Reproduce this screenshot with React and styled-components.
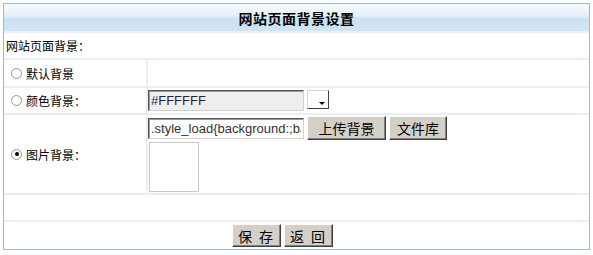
import React from "react";
import styled, { createGlobalStyle } from "styled-components";

const Global = createGlobalStyle`
  html, body { margin: 0; padding: 0; background: #fff; }
  body { font-family: "Noto Sans CJK SC", "Liberation Sans", sans-serif; font-size: 12px; color: #000; }
`;

const Page = styled.div`
  padding: 3px;
  width: 587px;
`;

const Panel = styled.div`
  border: 1px solid #9dbfc6;
  background: #e8eff5;
  display: flex;
  flex-direction: column;
  gap: 2px;
`;

const Header = styled.div`
  height: 27px;
  display: flex;
  align-items: center;
  justify-content: center;
  background: linear-gradient(#f6fafd 0%, #e4f0f9 45%, #cbe2f3 55%, #cfe5f5 100%);
  font-weight: bold;
  font-size: 14px;
  letter-spacing: 0.5px;
`;

const Row = styled.div`
  display: grid;
  grid-template-columns: ${(p) => (p.$split ? "142px 1fr" : "1fr")};
  gap: 2px;
  min-height: ${(p) => p.$h || 25}px;
`;

const Cell = styled.div`
  background: #fff;
  display: flex;
  align-items: center;
  justify-content: ${(p) => (p.$center ? "center" : "flex-start")};
  padding: ${(p) => p.$pad || "0"};
  gap: ${(p) => p.$gap || 0}px;
`;

const Stack = styled.div`
  display: flex;
  flex-direction: column;
  align-items: flex-start;
  gap: 2px;
  padding: 1px 0;
`;

const Line = styled.div`
  display: grid;
  grid-template-columns: 156px 79px 58px;
  align-items: center;
  column-gap: 3px;
`;

const Radio = styled.input.attrs({ type: "radio" })`
  appearance: none;
  flex-shrink: 0;
  width: 11px;
  height: 11px;
  margin: 0 4px 0 7px;
  border-radius: 50%;
  border: 1px solid #9a9a9a;
  background: radial-gradient(circle, #fff 55%, #e4e4e4 100%);
  position: relative;
  &:checked::after {
    content: "";
    position: absolute;
    left: 2.5px;
    top: 2.5px;
    width: 4px;
    height: 4px;
    border-radius: 50%;
    background: #000;
  }
`;

const Label = styled.label`
  display: flex;
  align-items: center;
  font-size: 12px;
`;

const TextInput = styled.input`
  width: 156px;
  min-width: 0;
  height: 21px;
  box-sizing: border-box;
  margin: 0;
  padding: 0 2px;
  border: 1px solid;
  border-color: #555 #d4d0c8 #d4d0c8 #555;
  box-shadow: inset 1px 1px 0 #9a9a9a;
  background: ${(p) => (p.$grey ? "#eeeeee" : "#fff")};
  font-family: "Liberation Sans", Arial, sans-serif;
  font-size: 13px;
  color: ${(p) => (p.$grey ? "#2b1a4a" : "#333")};
  outline: none;
`;

const ColorButton = styled.div`
  flex: 0 0 22px;
  height: 19px;
  box-sizing: border-box;
  border: 1px solid;
  border-color: #d8d8d8 #404040 #404040 #d8d8d8;
  background: #fff;
  position: relative;
  margin-top: -2px;
  &::after {
    content: "";
    position: absolute;
    right: 3px;
    bottom: 3px;
    border-left: 3px solid transparent;
    border-right: 3px solid transparent;
    border-top: 3px solid #000;
  }
`;

const Button = styled.button`
  flex: 0 0 ${(p) => p.$w}px;
  height: ${(p) => p.$h || 24}px;
  width: ${(p) => p.$w}px;
  box-sizing: border-box;
  margin: 0;
  padding: 0;
  background: #d4d0c8;
  border: 1px solid;
  border-color: #fff #404040 #404040 #fff;
  box-shadow: inset -1px -1px 0 #808080;
  font-family: "Noto Sans CJK SC", sans-serif;
  font-size: 14px;
  letter-spacing: ${(p) => (p.$spaced ? "2px" : "0")};
  line-height: 1;
  color: #000;
`;

const Preview = styled.div`
  width: 50px;
  height: 50px;
  box-sizing: border-box;
  border: 1px solid #c8c8c8;
  background: #fff;
  margin-left: 1px;
`;

export default function App() {
  return (
    <Page>
      <Global />
      <Panel>
        <Header>网站页面背景设置</Header>
        <Row $h={25}>
          <Cell $pad="0 0 0 2px">网站页面背景：</Cell>
        </Row>
        <Row $split $h={26}>
          <Cell>
            <Label><Radio name="bg" />默认背景</Label>
          </Cell>
          <Cell />
        </Row>
        <Row $split $h={25}>
          <Cell>
            <Label><Radio name="bg" />颜色背景：</Label>
          </Cell>
          <Cell $gap={3}>
            <TextInput $grey readOnly value="#FFFFFF" />
            <ColorButton />
          </Cell>
        </Row>
        <Row $split $h={77}>
          <Cell>
            <Label><Radio name="bg" defaultChecked />图片背景：</Label>
          </Cell>
          <Cell>
            <Stack>
              <Line>
                <TextInput readOnly value=".style_load{background:;background-repeat:no-repeat}" />
                <Button $w={79}>上传背景</Button>
                <Button $w={58}>文件库</Button>
              </Line>
              <Preview />
            </Stack>
          </Cell>
        </Row>
        <Row $h={25}>
          <Cell />
        </Row>
        <Row $h={27}>
          <Cell $center $gap={3} $pad="0 28px 0 0">
            <Button $w={49} $h={23} $spaced>保 存</Button>
            <Button $w={49} $h={23} $spaced>返 回</Button>
          </Cell>
        </Row>
      </Panel>
    </Page>
  );
}
